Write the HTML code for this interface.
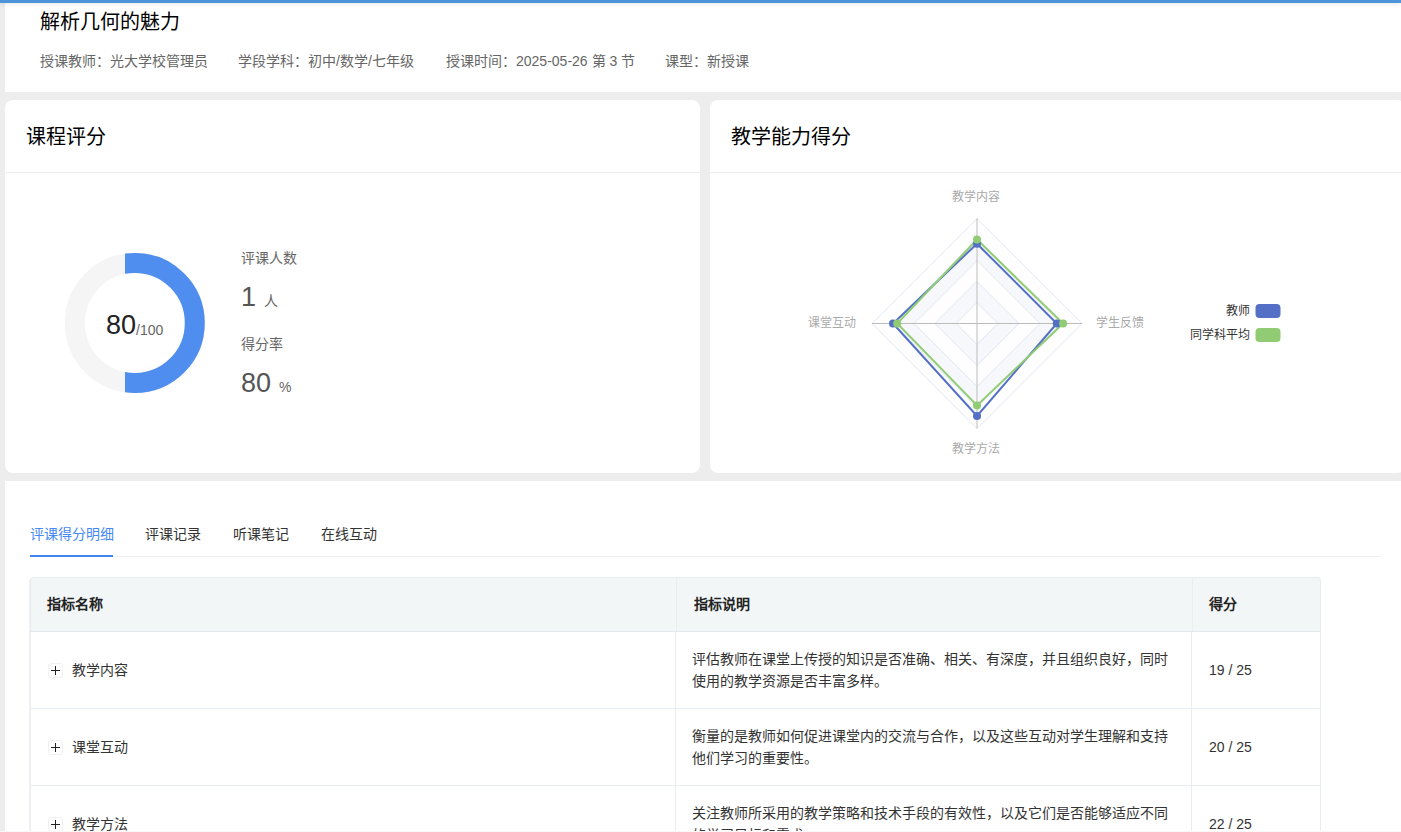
<!DOCTYPE html>
<html lang="zh-CN">
<head>
<meta charset="utf-8">
<style>
html,body{margin:0;padding:0;}
body{width:1401px;height:832px;overflow:hidden;background:#ededed;position:relative;font-family:"Liberation Sans",sans-serif;}
.abs{position:absolute;white-space:nowrap;}
.card{position:absolute;background:#fff;}
.topbar{position:absolute;left:0;top:0;width:1401px;height:3px;background:#4b95d8;box-shadow:0 1px 4px rgba(0,0,0,0.12);z-index:5;}
.t20{font-size:20px;color:#000;line-height:20px;}
.meta{font-size:14px;color:#666;line-height:14px;}
.divider{position:absolute;height:1px;background:#eeeeee;}
.lbl{font-size:14px;color:#666;line-height:14px;}
.big{font-size:27px;color:#555;line-height:27px;}
.unit{font-size:14px;color:#666;line-height:14px;}
.tab{font-size:14px;color:#333;line-height:14px;}
.th{font-size:14px;font-weight:bold;color:#222;line-height:14px;}
.plus{width:13px;height:13px;border:1px solid #f0f0f0;border-radius:3px;background:#fff;}
.plus:before{content:"";position:absolute;left:2px;top:6px;width:9px;height:1px;background:#222;}
.plus:after{content:"";position:absolute;left:6px;top:2px;width:1px;height:9px;background:#222;}
.td{font-size:14px;color:#333;line-height:22px;}
</style>
</head>
<body>
<div class="topbar"></div>

<!-- top card -->
<div class="card" style="left:5px;top:0;width:1396px;height:92px;"></div>
<div class="abs t20" style="left:40px;top:12px;">解析几何的魅力</div>
<div class="abs meta" style="left:40px;top:54px;">授课教师：光大学校管理员</div>
<div class="abs meta" style="left:238px;top:54px;">学段学科：初中/数学/七年级</div>
<div class="abs meta" style="left:446px;top:54px;">授课时间：2025-05-26 第 3 节</div>
<div class="abs meta" style="left:665px;top:54px;">课型：新授课</div>

<!-- row 2 -->
<div class="card" style="left:5px;top:100px;width:695px;height:373px;border-radius:8px;"></div>
<div class="card" style="left:710px;top:100px;width:695px;height:373px;border-radius:8px;"></div>
<div class="abs t20" style="left:26px;top:127px;">课程评分</div>
<div class="abs t20" style="left:731px;top:127px;">教学能力得分</div>
<div class="divider" style="left:5px;top:172px;width:695px;"></div>
<div class="divider" style="left:710px;top:172px;width:691px;"></div>

<!-- donut -->
<svg class="abs" style="left:0;top:0;" width="1401" height="832">
  <defs><clipPath id="cp"><rect x="125" y="240" width="100" height="170"/></clipPath></defs>
  <circle cx="134.8" cy="322.9" r="60" fill="none" stroke="#f5f5f5" stroke-width="20"/>
  <circle cx="134.8" cy="322.9" r="60" fill="none" stroke="#4f8eef" stroke-width="20" clip-path="url(#cp)"/>
</svg>
<div class="abs" style="left:106px;top:312px;font-size:27px;line-height:27px;color:#222;">80<span style="font-size:14px;color:#666;position:relative;top:1px;">/100</span></div>
<div class="abs lbl" style="left:241px;top:251px;">评课人数</div>
<div class="abs big" style="left:241px;top:284px;">1<span class="unit" style="margin-left:8px;">人</span></div>
<div class="abs lbl" style="left:241px;top:337px;">得分率</div>
<div class="abs big" style="left:241px;top:370px;">80<span class="unit" style="margin-left:8px;">%</span></div>

<!-- radar -->
<svg class="abs" style="left:0;top:0;" width="1401" height="832">
  <g transform="translate(977,323.5)">
    <polygon points="0,-105 -105,0 0,105 105,0" fill="#fefefe" stroke="#e0e6f1" stroke-width="1"/>
    <polygon points="0,-84 -84,0 0,84 84,0" fill="#f6f8fc" stroke="#e0e6f1" stroke-width="1"/>
    <polygon points="0,-63 -63,0 0,63 63,0" fill="#fefefe" stroke="#e0e6f1" stroke-width="1"/>
    <polygon points="0,-42 -42,0 0,42 42,0" fill="#f6f8fc" stroke="#e0e6f1" stroke-width="1"/>
    <polygon points="0,-21 -21,0 0,21 21,0" fill="#fefefe" stroke="#e0e6f1" stroke-width="1"/>
    <line x1="0" y1="-105" x2="0" y2="105" stroke="#bcbcbc" stroke-width="1"/>
    <line x1="-105" y1="0" x2="105" y2="0" stroke="#bcbcbc" stroke-width="1"/>
    <polygon points="0,-79.8 -84,0 0,92.4 79.8,0" fill="none" stroke="#5470c6" stroke-width="2"/>
    <polygon points="0,-84 -79.8,0 0,81.9 86.1,0" fill="none" stroke="#91cc75" stroke-width="2"/>
    <circle cx="0" cy="-79.8" r="4" fill="#5470c6"/>
    <circle cx="-84" cy="0" r="4" fill="#5470c6"/>
    <circle cx="0" cy="92.4" r="4" fill="#5470c6"/>
    <circle cx="79.8" cy="0" r="4" fill="#5470c6"/>
    <circle cx="0" cy="-84" r="4" fill="#91cc75"/>
    <circle cx="-79.8" cy="0" r="4" fill="#91cc75"/>
    <circle cx="0" cy="81.9" r="4" fill="#91cc75"/>
    <circle cx="86.1" cy="0" r="4" fill="#91cc75"/>
  </g>
  <rect x="1255.5" y="304" width="25" height="14" rx="4" fill="#5470c6"/>
  <rect x="1255.5" y="328" width="25" height="14" rx="4" fill="#91cc75"/>
</svg>
<div class="abs" style="left:952px;top:191px;font-size:12px;line-height:12px;color:#aaa;">教学内容</div>
<div class="abs" style="left:952px;top:443px;font-size:12px;line-height:12px;color:#aaa;">教学方法</div>
<div class="abs" style="left:808px;top:317px;font-size:12px;line-height:12px;color:#aaa;">课堂互动</div>
<div class="abs" style="left:1096px;top:317px;font-size:12px;line-height:12px;color:#aaa;">学生反馈</div>
<div class="abs" style="left:1226px;top:305px;font-size:12px;line-height:12px;color:#333;">教师</div>
<div class="abs" style="left:1190px;top:329px;font-size:12px;line-height:12px;color:#333;">同学科平均</div>

<!-- bottom card -->
<div class="card" style="left:5px;top:481px;width:1396px;height:351px;"></div>
<div class="abs tab" style="left:29.5px;top:527px;color:#4589f5;">评课得分明细</div>
<div class="abs tab" style="left:145px;top:527px;">评课记录</div>
<div class="abs tab" style="left:232.5px;top:527px;">听课笔记</div>
<div class="abs tab" style="left:320.5px;top:527px;">在线互动</div>
<div class="abs" style="left:30px;top:556px;width:1351px;height:1px;background:#f0f0f0;"></div>
<div class="abs" style="left:30px;top:555px;width:83px;height:2px;background:#3f86ee;"></div>


<!-- table -->
<div class="abs" style="left:30px;top:577px;width:1289px;height:53px;background:#f3f6f7;border:1px solid #e6ecf0;border-bottom:1px solid #e3eaee;border-radius:4px 4px 0 0;"></div>
<div class="abs" style="left:30px;top:632px;width:1289px;height:260px;border-left:1px solid #e8eef3;border-right:1px solid #e8eef3;"></div>
<div class="abs" style="left:676px;top:578px;width:1px;height:53px;background:#e8eef3;"></div>
<div class="abs" style="left:1192px;top:578px;width:1px;height:53px;background:#e8eef3;"></div>
<div class="abs" style="left:675px;top:632px;width:1px;height:200px;background:#e8eef3;"></div>
<div class="abs" style="left:1191px;top:632px;width:1px;height:200px;background:#e8eef3;"></div>
<div class="abs" style="left:31px;top:708px;width:1289px;height:1px;background:#e8eef3;"></div>
<div class="abs" style="left:31px;top:785px;width:1289px;height:1px;background:#e8eef3;"></div>
<div class="abs th" style="left:47px;top:597px;">指标名称</div>
<div class="abs th" style="left:694px;top:597px;">指标说明</div>
<div class="abs th" style="left:1209px;top:597px;">得分</div>
<div class="abs plus" style="left:48px;top:663px;"></div>
<div class="abs td" style="left:72px;top:659px;line-height:22px;">教学内容</div>
<div class="abs td" style="left:692px;top:648px;">评估教师在课堂上传授的知识是否准确、相关、有深度，并且组织良好，同时<br>使用的教学资源是否丰富多样。</div>
<div class="abs td" style="left:1209px;top:659px;">19 / 25</div>
<div class="abs plus" style="left:48px;top:740px;"></div>
<div class="abs td" style="left:72px;top:736px;line-height:22px;">课堂互动</div>
<div class="abs td" style="left:692px;top:725px;">衡量的是教师如何促进课堂内的交流与合作，以及这些互动对学生理解和支持<br>他们学习的重要性。</div>
<div class="abs td" style="left:1209px;top:736px;">20 / 25</div>
<div class="abs plus" style="left:48px;top:817px;"></div>
<div class="abs td" style="left:72px;top:813px;line-height:22px;">教学方法</div>
<div class="abs td" style="left:692px;top:802px;">关注教师所采用的教学策略和技术手段的有效性，以及它们是否能够适应不同<br>的学习目标和需求。</div>
<div class="abs td" style="left:1209px;top:813px;">22 / 25</div>
<div class="abs" style="left:29px;top:580px;width:1px;height:252px;background:#f1f1f1;"></div>
<div class="abs" style="left:0;top:831px;width:1401px;height:1px;background:#f8f8f8;z-index:9;"></div>
</body>
</html>
